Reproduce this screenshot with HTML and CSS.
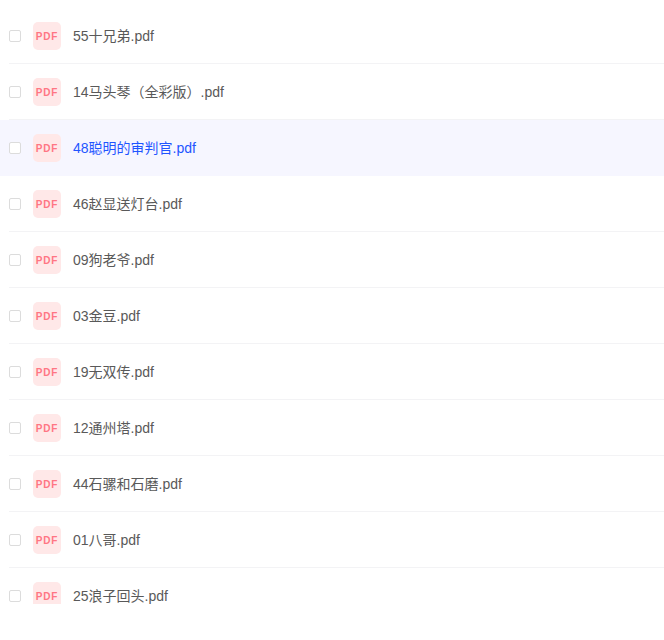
FILE: index.html
```html
<!DOCTYPE html>
<html lang="en">
<head>
    <meta charset="UTF-8">
    <meta name="viewport" content="width=device-width, initial-scale=1.0">
    <title>Files</title>
    <link rel="stylesheet" href="styles.css">
</head>
<body>
    <div class="file-list">
        <div class="file-row"><div class="file-inner"><span class="check"></span><span class="pdf-icon">PDF</span><span class="file-name">55十兄弟.pdf</span></div></div>
        <div class="file-row"><div class="file-inner"><span class="check"></span><span class="pdf-icon">PDF</span><span class="file-name">14马头琴（全彩版）.pdf</span></div></div>
        <div class="file-row active"><div class="file-inner"><span class="check"></span><span class="pdf-icon">PDF</span><span class="file-name">48聪明的审判官.pdf</span></div></div>
        <div class="file-row"><div class="file-inner"><span class="check"></span><span class="pdf-icon">PDF</span><span class="file-name">46赵显送灯台.pdf</span></div></div>
        <div class="file-row"><div class="file-inner"><span class="check"></span><span class="pdf-icon">PDF</span><span class="file-name">09狗老爷.pdf</span></div></div>
        <div class="file-row"><div class="file-inner"><span class="check"></span><span class="pdf-icon">PDF</span><span class="file-name">03金豆.pdf</span></div></div>
        <div class="file-row"><div class="file-inner"><span class="check"></span><span class="pdf-icon">PDF</span><span class="file-name">19无双传.pdf</span></div></div>
        <div class="file-row"><div class="file-inner"><span class="check"></span><span class="pdf-icon">PDF</span><span class="file-name">12通州塔.pdf</span></div></div>
        <div class="file-row"><div class="file-inner"><span class="check"></span><span class="pdf-icon">PDF</span><span class="file-name">44石骡和石磨.pdf</span></div></div>
        <div class="file-row"><div class="file-inner"><span class="check"></span><span class="pdf-icon">PDF</span><span class="file-name">01八哥.pdf</span></div></div>
        <div class="file-row"><div class="file-inner"><span class="check"></span><span class="pdf-icon">PDF</span><span class="file-name">25浪子回头.pdf</span></div></div>
    </div>
</body>
</html>
```

FILE: styles.css
```css
body {
    margin: 0;
    padding: 8px 0 0;
    background-color: white;
    font-family: "Liberation Sans", "Noto Sans CJK SC", sans-serif;
}

.file-list {
    height: 596px;
    overflow: hidden;
}

.file-row {
    height: 56px;
    padding-left: 9px;
}

.file-row.active {
    background-color: #f6f6ff;
}

.file-inner {
    display: flex;
    align-items: center;
    height: 56px;
    box-sizing: border-box;
    border-bottom: 1px solid #f3f3f5;
}

.file-row.active .file-inner {
    border-bottom-color: transparent;
}

.check {
    width: 12px;
    height: 12px;
    box-sizing: border-box;
    border: 1px solid #dcdcdc;
    border-radius: 2px;
    background-color: white;
    margin-right: 12px;
}

.pdf-icon {
    width: 28px;
    height: 28px;
    border-radius: 5px;
    background-color: #ffe8e8;
    color: #ff7683;
    font-size: 10px;
    font-weight: bold;
    letter-spacing: 0.8px;
    line-height: 30px;
    text-align: center;
    margin-right: 12px;
    overflow: hidden;
}

.file-name {
    font-size: 14px;
    color: #595959;
    margin-bottom: 2px;
}

.file-row.active .file-name {
    color: #1f55ff;
}
```
